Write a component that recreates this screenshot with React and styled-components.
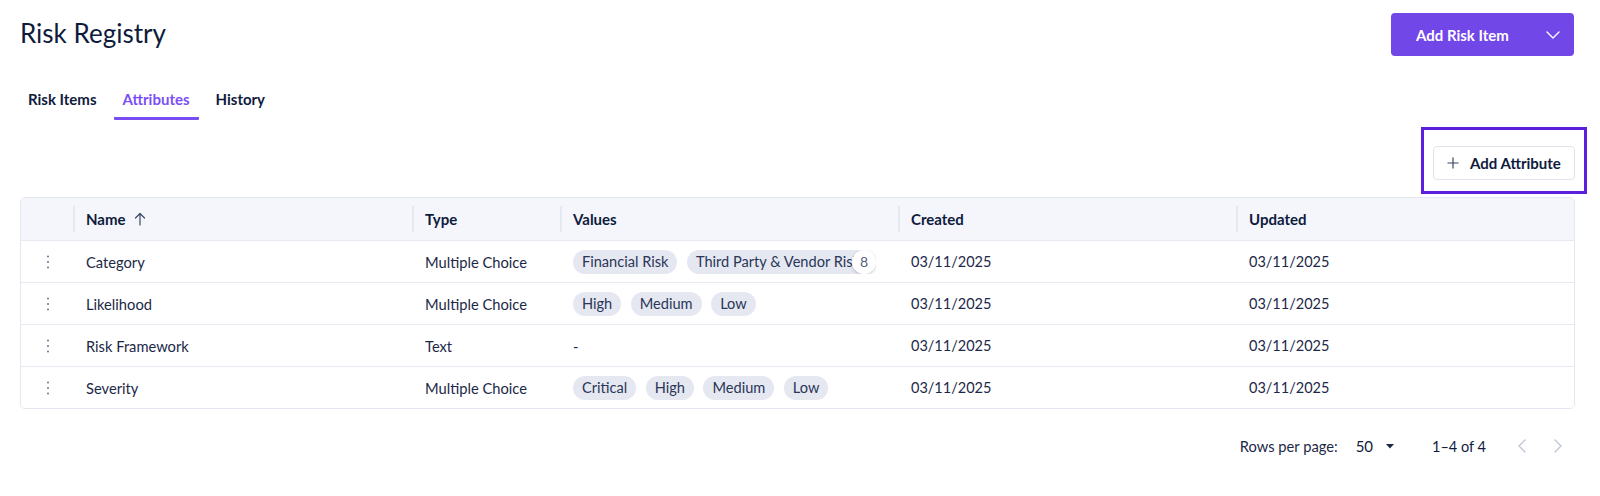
import React from "react";
import styled, { createGlobalStyle } from "styled-components";

const Global = createGlobalStyle`
  * { box-sizing: border-box; }
  html, body { margin: 0; padding: 0; background: #ffffff; }
  body { font-family: Lato, "Noto Sans", sans-serif; color: #0f1b3d; -webkit-font-smoothing: antialiased; }
`;

const Page = styled.div`
  width: 1600px;
  padding: 13px 25px 0 20px;
`;

const HeaderRow = styled.div`
  display: flex;
  justify-content: space-between;
  align-items: flex-start;
`;

const Title = styled.h1`
  margin: 4px 0 0;
  font-size: 26px;
  line-height: 32px;
  font-weight: 400;
  color: #0f1b3d;
`;

const PrimaryButton = styled.button`
  display: flex;
  align-items: center;
  height: 43px;
  width: 183px;
  padding: 0 14px 0 25px;
  margin-right: 1px;
  border: none;
  border-radius: 4px;
  background: #7147e8;
  color: #ffffff;
  font-family: inherit;
  font-size: 15px;
  font-weight: 700;
  cursor: pointer;
  span { flex: 1; text-align: left; }
`;

const Tabs = styled.div`
  display: flex;
  gap: 8px;
  margin: 25px 0 0 -1px;
`;

const Tab = styled.div`
  padding: 8px 9px 8px;
  font-size: 15px;
  line-height: 20px;
  font-weight: 700;
  color: ${(p) => (p.$active ? "#7b4ff5" : "#0f1b3d")};
  border-bottom: 3px solid ${(p) => (p.$active ? "#7a4cf3" : "transparent")};
  border-radius: 0 0 1px 1px;
`;

const Toolbar = styled.div`
  display: flex;
  justify-content: flex-end;
  margin-top: 7px;
`;

const FocusRing = styled.div`
  border: 3px solid #5b1fe0;
  padding: 16px 9px 11px;
  margin-right: -12px;
`;

const OutlineButton = styled.button`
  display: flex;
  align-items: center;
  gap: 11px;
  height: 34px;
  width: 142px;
  padding: 0 0 0 13px;
  background: #ffffff;
  border: 1px solid #dfe3ec;
  border-radius: 4px;
  font-family: inherit;
  font-size: 15px;
  font-weight: 700;
  color: #0f1b3d;
  cursor: pointer;
  white-space: nowrap;
`;

const TableBox = styled.div`
  margin-top: 3px;
  border: 1px solid #e3e7ef;
  border-radius: 5px;
  overflow: hidden;
`;

const Row = styled.div`
  display: grid;
  grid-template-columns: 52px 339px 148px 338px 338px 1fr;
  height: 42px;
  background: ${(p) => (p.$head ? "#f4f6fb" : "#ffffff")};
  border-top: ${(p) => (p.$head ? "none" : "1px solid #e7eaf1")};
`;

const HeadCell = styled.div`
  position: relative;
  display: flex;
  align-items: center;
  gap: 8px;
  padding-left: 13px;
  font-size: 15px;
  font-weight: 700;
  color: #0f1b3d;
  &::before {
    content: "";
    display: ${(p) => (p.$noSep ? "none" : "block")};
    position: absolute;
    left: 0;
    top: 8px;
    width: 2px;
    height: 26px;
    background: #e4e8f0;
  }
`;

const Cell = styled.div`
  display: flex;
  align-items: center;
  padding-left: 13px;
  font-size: ${(p) => (p.$date ? "14.5px" : "14.7px")};
  color: #1c2848;
  white-space: nowrap;
  min-width: 0;
`;

const DragCell = styled.div`
  display: flex;
  align-items: center;
  justify-content: center;
  padding-left: 2px;
`;

const ChipArea = styled.div`
  position: relative;
  display: flex;
  gap: 9.5px;
  width: ${(p) => (p.$clip ? "303px" : "auto")};
  max-width: 303px;
  overflow: hidden;
`;

const Chip = styled.span`
  flex-shrink: 0;
  display: inline-flex;
  align-items: center;
  height: 24px;
  padding: 0 9px;
  border-radius: 12px;
  background: #e5e8f1;
  font-size: 14.6px;
  color: #2a3658;
  white-space: nowrap;
`;

const CountBadge = styled.span`
  position: absolute;
  right: 0;
  top: 0;
  width: 24px;
  height: 24px;
  border-radius: 50%;
  background: #ffffff;
  box-shadow: 0 1px 3px rgba(20, 30, 60, 0.25);
  display: flex;
  align-items: center;
  justify-content: center;
  font-size: 14px;
  color: #56617d;
`;

const Pagination = styled.div`
  display: flex;
  justify-content: flex-end;
  align-items: center;
  height: 48px;
  margin-top: 13px;
  font-size: 14.7px;
  color: #1c2848;
`;

const PageSelect = styled.div`
  display: flex;
  align-items: center;
  gap: 13px;
  margin-left: 18px;
  font-size: 15px;
  color: #0f1b3d;
`;

const RangeText = styled.div`
  margin-left: 38px;
  font-size: 14.5px;
  color: #0f1b3d;
`;

const NavButtons = styled.div`
  display: flex;
  gap: 22px;
  margin-left: 29px;
  margin-right: 10px;
`;

const NavBtn = styled.span`
  display: flex;
  width: 14px;
  justify-content: center;
`;

const Dots = () => (
  <svg width="4" height="16" viewBox="0 0 4 16">
    <circle cx="2" cy="2.5" r="1.1" fill="#7683a1" />
    <circle cx="2" cy="8" r="1.1" fill="#7683a1" />
    <circle cx="2" cy="13.5" r="1.1" fill="#7683a1" />
  </svg>
);

const rows = [
  { name: "Category", type: "Multiple Choice", values: ["Financial Risk", "Third Party & Vendor Risk"], count: 8 },
  { name: "Likelihood", type: "Multiple Choice", values: ["High", "Medium", "Low"] },
  { name: "Risk Framework", type: "Text", values: null },
  { name: "Severity", type: "Multiple Choice", values: ["Critical", "High", "Medium", "Low"] },
];

export default function App() {
  return (
    <>
      <Global />
      <Page>
        <HeaderRow>
          <Title>Risk Registry</Title>
          <PrimaryButton>
            <span>Add Risk Item</span>
            <svg width="14" height="8" viewBox="0 0 14 8" fill="none">
              <path d="M1 1l6 6 6-6" stroke="#ffffff" strokeWidth="1.4" strokeLinecap="round" strokeLinejoin="round" />
            </svg>
          </PrimaryButton>
        </HeaderRow>

        <Tabs>
          <Tab>Risk Items</Tab>
          <Tab $active>Attributes</Tab>
          <Tab>History</Tab>
        </Tabs>

        <Toolbar>
          <FocusRing>
            <OutlineButton>
              <svg width="12" height="12" viewBox="0 0 12 12" fill="none">
                <path d="M6 0.5v11M0.5 6h11" stroke="#3b4667" strokeWidth="1.2" />
              </svg>
              Add Attribute
            </OutlineButton>
          </FocusRing>
        </Toolbar>

        <TableBox>
          <Row $head>
            <HeadCell $noSep />
            <HeadCell>
              Name
              <svg width="12" height="14" viewBox="0 0 12 14" fill="none">
                <path d="M6 13V1.5M1.5 6L6 1.5 10.5 6" stroke="#3b4667" strokeWidth="1.2" strokeLinecap="round" strokeLinejoin="round" />
              </svg>
            </HeadCell>
            <HeadCell>Type</HeadCell>
            <HeadCell>Values</HeadCell>
            <HeadCell>Created</HeadCell>
            <HeadCell>Updated</HeadCell>
          </Row>
          {rows.map((r) => (
            <Row key={r.name}>
              <DragCell>
                <Dots />
              </DragCell>
              <Cell>{r.name}</Cell>
              <Cell>{r.type}</Cell>
              <Cell>
                {r.values ? (
                  <ChipArea $clip={!!r.count}>
                    {r.values.map((v) => (
                      <Chip key={v}>{v}</Chip>
                    ))}
                    {r.count ? <CountBadge>{r.count}</CountBadge> : null}
                  </ChipArea>
                ) : (
                  "-"
                )}
              </Cell>
              <Cell $date>03/11/2025</Cell>
              <Cell $date>03/11/2025</Cell>
            </Row>
          ))}
        </TableBox>

        <Pagination>
          <span>Rows per page:</span>
          <PageSelect>
            50
            <svg width="8" height="5" viewBox="0 0 8 5">
              <path d="M0 0h8L4 4.5z" fill="#1c2848" />
            </svg>
          </PageSelect>
          <RangeText>1–4 of 4</RangeText>
          <NavButtons>
            <NavBtn>
              <svg width="8" height="14" viewBox="0 0 8 14" fill="none">
                <path d="M7 1L1 7l6 6" stroke="#bcc3d2" strokeWidth="1.3" strokeLinecap="round" strokeLinejoin="round" />
              </svg>
            </NavBtn>
            <NavBtn>
              <svg width="8" height="14" viewBox="0 0 8 14" fill="none">
                <path d="M1 1l6 6-6 6" stroke="#bcc3d2" strokeWidth="1.3" strokeLinecap="round" strokeLinejoin="round" />
              </svg>
            </NavBtn>
          </NavButtons>
        </Pagination>
      </Page>
    </>
  );
}
